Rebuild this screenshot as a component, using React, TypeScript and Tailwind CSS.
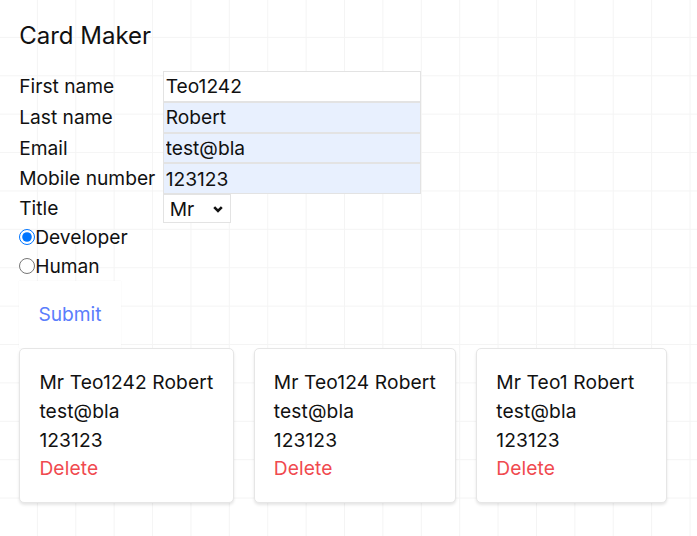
import { useState } from "react";

type Card = {
  id: number;
  title: string;
  firstName: string;
  lastName: string;
  email: string;
  mobile: string;
};

const initialCards: Card[] = [
  { id: 1, title: "Mr", firstName: "Teo1242", lastName: "Robert", email: "test@bla", mobile: "123123" },
  { id: 2, title: "Mr", firstName: "Teo124", lastName: "Robert", email: "test@bla", mobile: "123123" },
  { id: 3, title: "Mr", firstName: "Teo1", lastName: "Robert", email: "test@bla", mobile: "123123" },
];

export default function App() {
  const [cards, setCards] = useState<Card[]>(initialCards);
  const [firstName, setFirstName] = useState("Teo1242");
  const [lastName, setLastName] = useState("Robert");
  const [email, setEmail] = useState("test@bla");
  const [mobile, setMobile] = useState("123123");
  const [title, setTitle] = useState("Mr");
  const [kind, setKind] = useState("developer");

  const inputClass =
    "h-[30.75px] w-full border border-[#e3e3e3] px-[2px] outline-none leading-normal";

  const submit = () => {
    setCards([
      ...cards,
      { id: Date.now(), title, firstName, lastName, email, mobile },
    ]);
  };

  return (
    <div className="min-h-screen bg-white bg-[linear-gradient(to_right,#f4f4f4_1px,transparent_1px),linear-gradient(to_bottom,#f4f4f4_1px,transparent_1px)] bg-[size:38.4px_38.4px] bg-[position:-1.5px_-1.5px] p-[19.2px] pt-[17.5px] font-['Inter',sans-serif] text-[19.2px] leading-[28.8px] text-[#111]">
      <h1 className="mb-[17.5px] text-[24px] leading-[36px]">Card Maker</h1>

      <div className="grid grid-cols-[143.5px_258px]">
        <label className="leading-[30px]">First name</label>
        <input
          className={inputClass + " bg-white"}
          value={firstName}
          onChange={(e) => setFirstName(e.target.value)}
        />
        <label className="leading-[30px]">Last name</label>
        <input
          className={inputClass + " bg-[#e8f0fe]"}
          value={lastName}
          onChange={(e) => setLastName(e.target.value)}
        />
        <label className="leading-[30px]">Email</label>
        <input
          className={inputClass + " bg-[#e8f0fe]"}
          value={email}
          onChange={(e) => setEmail(e.target.value)}
        />
        <label className="leading-[30px]">Mobile number</label>
        <input
          className={inputClass + " bg-[#e8f0fe]"}
          value={mobile}
          onChange={(e) => setMobile(e.target.value)}
        />
        <label className="leading-[29px]">Title</label>
        <div className="relative h-[29px] w-[68px]">
          <select
            className="h-full w-full appearance-none border border-[#e3e3e3] bg-white pl-[6px] leading-normal outline-none"
            value={title}
            onChange={(e) => setTitle(e.target.value)}
          >
            <option>Mr</option>
            <option>Mrs</option>
            <option>Ms</option>
          </select>
          <svg
            className="pointer-events-none absolute right-[8px] top-[11.5px] h-[7px] w-[10px]"
            viewBox="0 0 10 7"
            fill="none"
            stroke="#111"
            strokeWidth="2.6"
          >
            <path d="M1.2 1.2l3.8 3.8 3.8-3.8" />
          </svg>
        </div>
      </div>

      <label className="flex items-center">
        <input
          type="radio"
          name="kind"
          className="h-[16px] w-[16px] shrink-0"
          checked={kind === "developer"}
          onChange={() => setKind("developer")}
        />
        Developer
      </label>
      <label className="flex items-center">
        <input
          type="radio"
          name="kind"
          className="h-[16px] w-[16px] shrink-0"
          checked={kind === "human"}
          onChange={() => setKind("human")}
        />
        Human
      </label>

      <button
        className="block bg-white p-[19.2px] text-[#5a7dfc] shadow-[0_0_1px_rgba(0,0,0,0.08)]"
        onClick={submit}
      >
        Submit
      </button>

      <div className="flex items-start gap-[20px]">
        {cards.map((card) => (
          <div
            key={card.id}
            className="min-w-[191px] rounded-[5px] border border-[#e6e6e6] bg-white p-[19.2px] tracking-[0.12px] shadow-[0_2px_3px_rgba(0,0,0,0.1)]"
          >
            <p>
              {card.title} {card.firstName} {card.lastName}
            </p>
            <p>{card.email}</p>
            <p>{card.mobile}</p>
            <button
              className="text-[#f04a4f]"
              onClick={() => setCards(cards.filter((c) => c.id !== card.id))}
            >
              Delete
            </button>
          </div>
        ))}
      </div>
    </div>
  );
}
